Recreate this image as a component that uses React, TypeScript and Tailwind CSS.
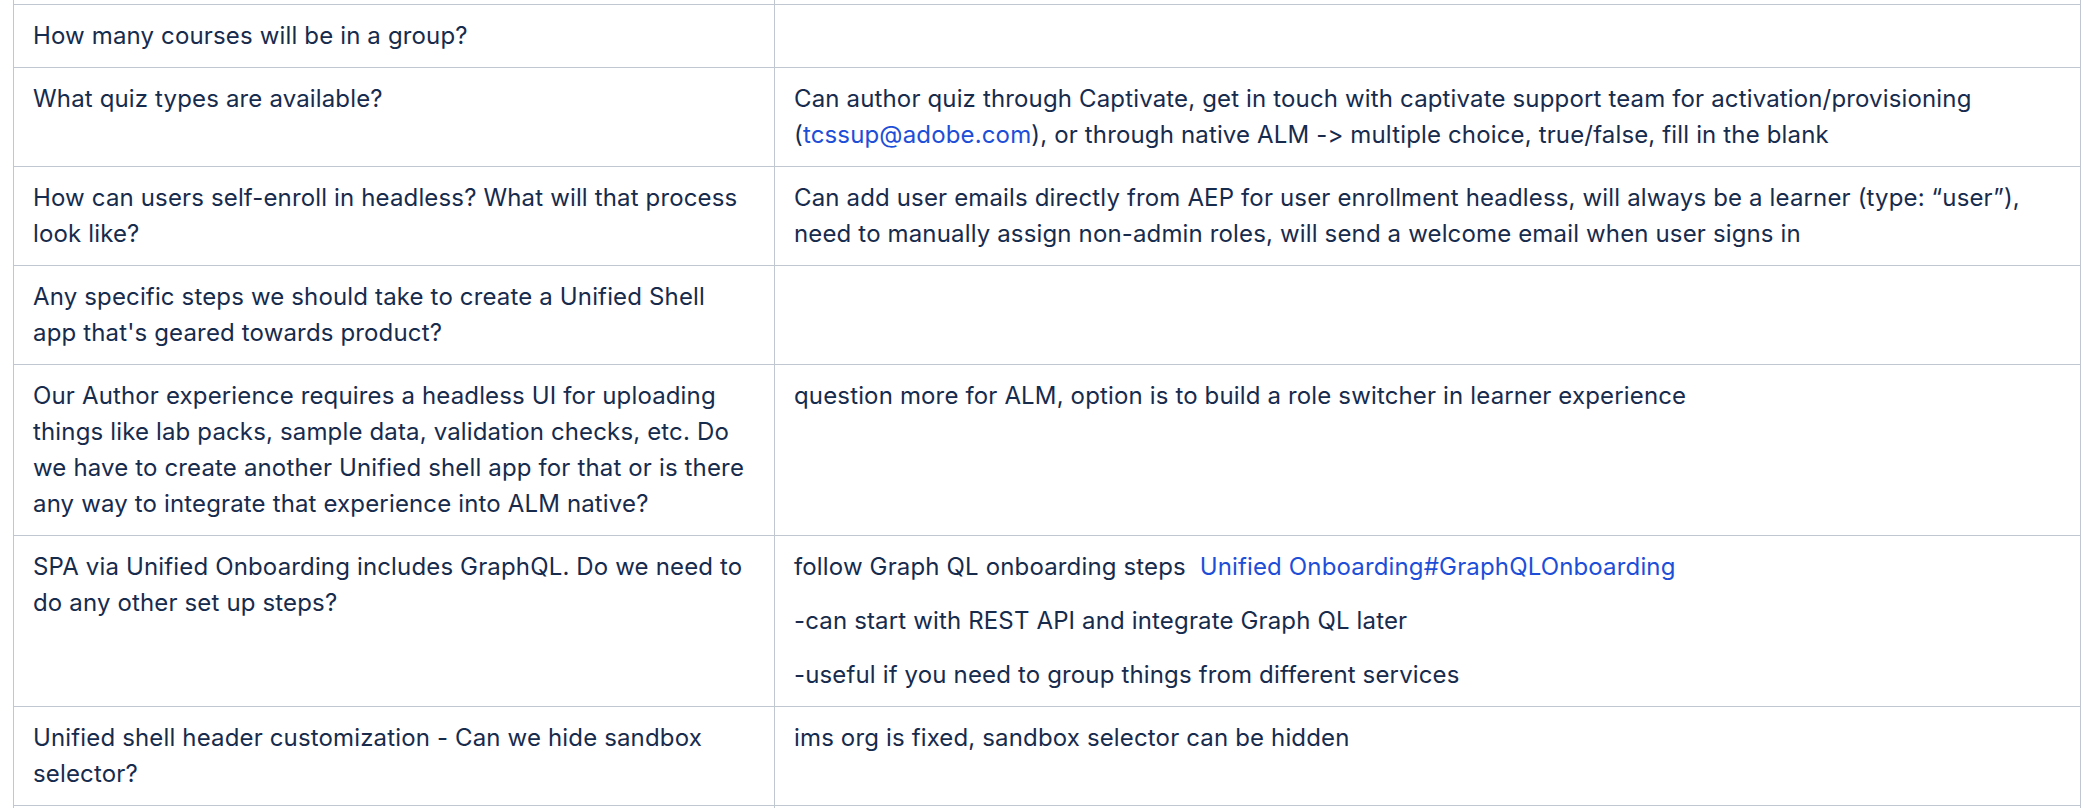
const rows: { q: string; a: React.ReactNode }[] = [
  { q: 'How many courses will be in a group?', a: null },
  {
    q: 'What quiz types are available?',
    a: (
      <p>
        Can author quiz through Captivate, get in touch with captivate support team for activation/provisioning (
        <a className="text-[#1d4ed8]">tcssup@adobe.com</a>), or through native ALM -&gt; multiple choice, true/false,
        fill in the blank
      </p>
    ),
  },
  {
    q: 'How can users self-enroll in headless? What will that process look like?',
    a: (
      <p>
        Can add user emails directly from AEP for user enrollment headless, will always be a learner (type: “user”),
        need to manually assign non-admin roles, will send a welcome email when user signs in
      </p>
    ),
  },
  {
    q: "Any specific steps we should take to create a Unified Shell app that's geared towards product?",
    a: null,
  },
  {
    q: 'Our Author experience requires a headless UI for uploading things like lab packs, sample data, validation checks, etc. Do we have to create another Unified shell app for that or is there any way to integrate that experience into ALM native?',
    a: <p>question more for ALM, option is to build a role switcher in learner experience</p>,
  },
  {
    q: 'SPA via Unified Onboarding includes GraphQL. Do we need to do any other set up steps?',
    a: (
      <div className="flex flex-col gap-[18px]">
        <p>
          follow Graph QL onboarding steps&nbsp; <a className="text-[#1d4ed8]">Unified Onboarding#GraphQLOnboarding</a>
        </p>
        <p>-can start with REST API and integrate Graph QL later</p>
        <p>-useful if you need to group things from different services</p>
      </div>
    ),
  },
  {
    q: 'Unified shell header customization - Can we hide sandbox selector?',
    a: <p>ims org is fixed, sandbox selector can be hidden</p>,
  },
  { q: '', a: null },
]

export default function App() {
  return (
    <div className="h-[808px] overflow-hidden bg-white font-['Inter',sans-serif] text-[24px] leading-[36px] tracking-[0.15px] text-[#172b4d] [font-feature-settings:'calt'_0,'liga'_0]">
      <div className="ml-[13px] w-[2068px] border-x border-[#c1c7d0]">
        <div className="grid h-[4px] grid-cols-[761px_1fr]">
          <div className="border-r border-[#c1c7d0]" />
          <div />
        </div>
        {rows.map((row, i) => (
          <div key={i} className="grid grid-cols-[761px_1fr] border-t border-[#c1c7d0]">
            <div className="border-r border-[#c1c7d0] px-[19px] py-[13px]">
              <p className="min-h-[36px]">{row.q}</p>
            </div>
            <div className="px-[19px] py-[13px]">{row.a}</div>
          </div>
        ))}
      </div>
    </div>
  )
}
